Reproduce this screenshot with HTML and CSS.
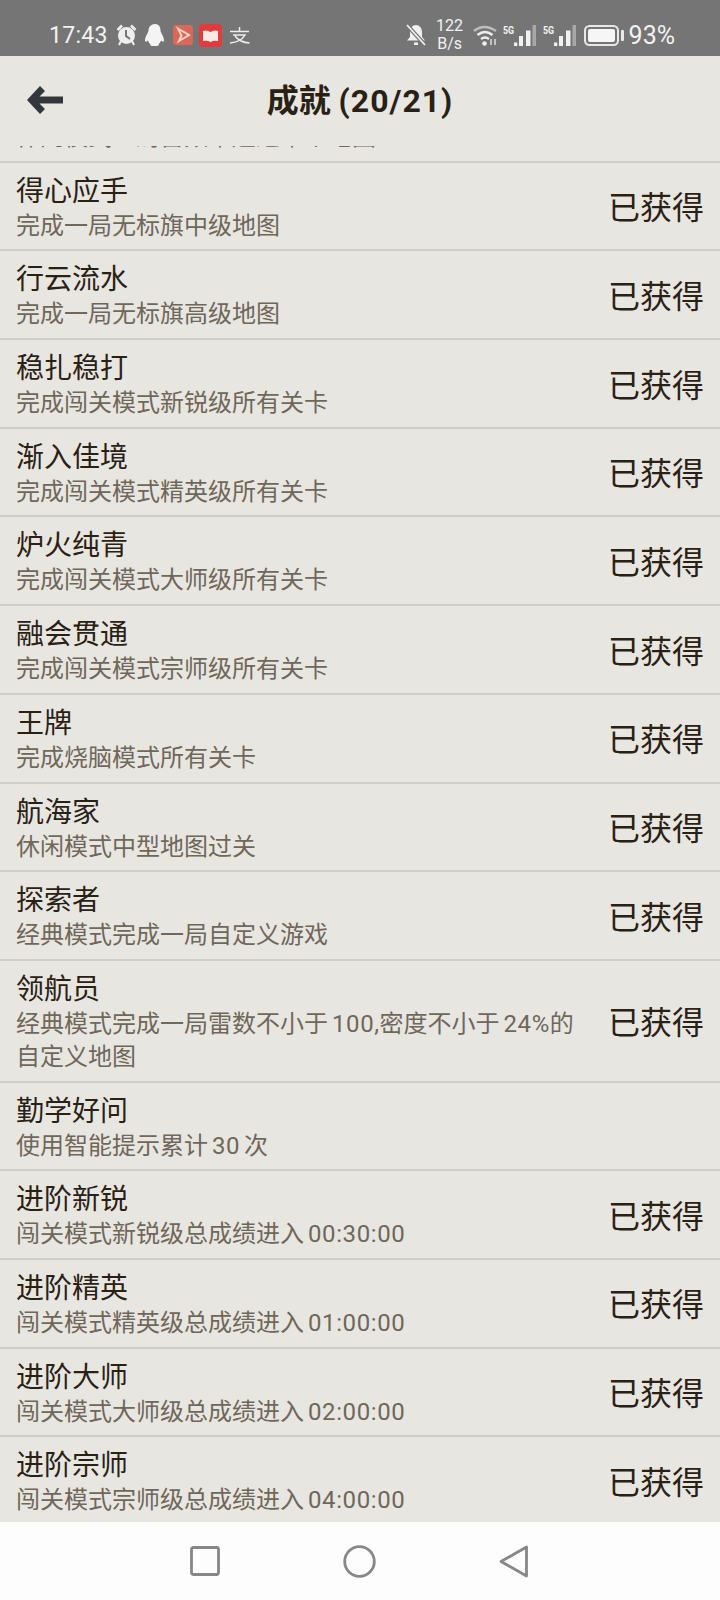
FILE: index.html
```html
<!DOCTYPE html>
<html lang="zh-CN">
<head>
<meta charset="utf-8">
<title>成就</title>
<link rel="stylesheet" href="styles.css">
</head>
<body>
<div class="phone">
  <div class="statusbar">
    <div class="sb-left">
      <span class="time">17:43</span>
      <svg class="ic" width="21" height="22" viewBox="0 0 21 22"><path d="M1.500 6 6 1.500M19.500 6 15 1.500" stroke="#eee" stroke-width="2.600" fill="none"/><path d="M5 17l-2 4M16 17l2 4" stroke="#eee" stroke-width="2"/><circle cx="10.500" cy="11.500" r="8.500" fill="#eee"/><path d="M10 6v6l4 3" stroke="#757575" stroke-width="2" fill="none"/></svg>
      <svg class="ic" width="20" height="22" viewBox="0 0 20 22"><path d="M10 0c4 0 5.500 3 5.500 6.500 0 2 3.500 6 3.500 10 0 1.500-1.500 1.500-3 0-.500 2-1.500 3-2.500 3.500 1 1 0 2-2 2H7.500c-2 0-3-1-2-2C4.500 19.500 3.500 18.500 3 16.500c-1.500 1.500-3 1.500-3 0 0-4 3.500-8 3.500-10C3.500 3 6 0 10 0z" fill="#f4f4f4"/></svg>
      <svg class="ic" width="20" height="20" viewBox="0 0 20 20"><rect width="20" height="20" rx="3" fill="#d9675a"/><path d="M5 3.500 16 10 6 16l2.500-5.500z" fill="none" stroke="#f7d5c3" stroke-width="2"/></svg>
      <svg class="ic ic-red" width="23" height="23" viewBox="0 0 23 23"><rect width="23" height="23" rx="4" fill="#e23b3d"/><path d="M4 7q4-1.500 7.500 1Q15 5.500 19 7v10q-4-1-7.500 1Q8 16 4 17z" fill="#f7e9e4"/></svg>
      <svg class="ic ic-zhi" width="21" height="17" viewBox="0 0 21 17"><path d="M1 4.500h19M10.500 0v4.500M4 8h12Q12 15 1 16M6 9q5 6.500 14.500 7" fill="none" stroke="#eee" stroke-width="1.500"/></svg>
    </div>
    <div class="sb-right">
      <svg class="ic" width="20" height="22" viewBox="0 0 20 22"><path d="M10 1c3.500 0 6 3 6 7v5l3 3.500H1L4 13V8c0-4 2.500-7 6-7zM8 18.500h4V21H8z" fill="#f0f0f0"/><path d="M1 1l18 20" stroke="#757575" stroke-width="4"/><path d="M1 1l18 20" stroke="#f0f0f0" stroke-width="1.800"/></svg>
      <div class="speed"><span>122</span><span>B/s</span></div>
      <svg class="ic" width="24" height="22" viewBox="0 0 24 22"><path d="M1 7q10-8 22 0" fill="none" stroke="#bdbdbd" stroke-width="2.500"/><path d="M4.500 11q7.500-6 15 0" fill="none" stroke="#eee" stroke-width="2.500"/><path d="M8 15q4-3 8 0" fill="none" stroke="#eee" stroke-width="2.200"/><circle cx="11.500" cy="19.500" r="2.300" fill="#eee"/><path d="M18 15v6M22 15v6" stroke="#ddd" stroke-width="1.500"/></svg>
      <div class="signal"><span class="sig5">5G</span><svg width="22" height="21" viewBox="0 0 22 21"><path d="M0 17.500h3.300V21H0zM5 11h4v10H5zM12 5.500h4.500V21H12z" fill="#f0f0f0"/><path d="M18.500 0H22v21h-3.500z" fill="#a8a8a8"/></svg></div>
      <div class="signal"><span class="sig5">5G</span><svg width="22" height="21" viewBox="0 0 22 21"><path d="M0 17.500h3.300V21H0zM5 11h4v10H5zM12 5.500h4.500V21H12z" fill="#f0f0f0"/><path d="M18.500 0H22v21h-3.500z" fill="#a8a8a8"/></svg></div>
      <svg class="ic batt" width="40" height="21" viewBox="0 0 40 21"><rect x="1" y="1" width="33" height="19" rx="4.500" fill="none" stroke="#e8e8e8" stroke-width="2"/><rect x="4" y="4" width="27" height="13" rx="2" fill="#f6f6f6"/><rect x="37" y="5" width="3" height="11" rx="1" fill="#e8e8e8"/></svg>
      <span class="pct">93%</span>
    </div>
  </div>
  <header class="appbar">
    <svg class="back" width="36" height="28" viewBox="0 0 36 28"><path d="M0 14 13 0l5 5-5.500 5.500H36v7H12.500L18 23l-5 5z" fill="#33363a"/></svg>
    <h1 class="title">成就 <span class="title-num">(20/21)</span></h1>
  </header>
  <main class="list">
    <div class="rows">
      <div class="row"><div class="info"><div class="name">胸有成竹</div><div class="desc">休闲模式一局雷数不超过十个地图</div></div></div>
      <div class="row"><div class="info"><div class="name">得心应手</div><div class="desc">完成一局无标旗中级地图</div></div><div class="got">已获得</div></div>
      <div class="row"><div class="info"><div class="name">行云流水</div><div class="desc">完成一局无标旗高级地图</div></div><div class="got">已获得</div></div>
      <div class="row"><div class="info"><div class="name">稳扎稳打</div><div class="desc">完成闯关模式新锐级所有关卡</div></div><div class="got">已获得</div></div>
      <div class="row"><div class="info"><div class="name">渐入佳境</div><div class="desc">完成闯关模式精英级所有关卡</div></div><div class="got">已获得</div></div>
      <div class="row"><div class="info"><div class="name">炉火纯青</div><div class="desc">完成闯关模式大师级所有关卡</div></div><div class="got">已获得</div></div>
      <div class="row"><div class="info"><div class="name">融会贯通</div><div class="desc">完成闯关模式宗师级所有关卡</div></div><div class="got">已获得</div></div>
      <div class="row"><div class="info"><div class="name">王牌</div><div class="desc">完成烧脑模式所有关卡</div></div><div class="got">已获得</div></div>
      <div class="row"><div class="info"><div class="name">航海家</div><div class="desc">休闲模式中型地图过关</div></div><div class="got">已获得</div></div>
      <div class="row"><div class="info"><div class="name">探索者</div><div class="desc">经典模式完成一局自定义游戏</div></div><div class="got">已获得</div></div>
      <div class="row"><div class="info"><div class="name">领航员</div><div class="desc">经典模式完成一局雷数不小于 <span class="num">100,</span>密度不小于 <span class="num">24%</span>的<br>自定义地图</div></div><div class="got">已获得</div></div>
      <div class="row"><div class="info"><div class="name">勤学好问</div><div class="desc">使用智能提示累计 <span class="num">30</span> 次</div></div></div>
      <div class="row"><div class="info"><div class="name">进阶新锐</div><div class="desc">闯关模式新锐级总成绩进入 <span class="num">00:30:00</span></div></div><div class="got">已获得</div></div>
      <div class="row"><div class="info"><div class="name">进阶精英</div><div class="desc">闯关模式精英级总成绩进入 <span class="num">01:00:00</span></div></div><div class="got">已获得</div></div>
      <div class="row"><div class="info"><div class="name">进阶大师</div><div class="desc">闯关模式大师级总成绩进入 <span class="num">02:00:00</span></div></div><div class="got">已获得</div></div>
      <div class="row"><div class="info"><div class="name">进阶宗师</div><div class="desc">闯关模式宗师级总成绩进入 <span class="num">04:00:00</span></div></div><div class="got">已获得</div></div>
    </div>
  </main>
  <nav class="navbar">
    <svg width="30" height="30" viewBox="0 0 30 30"><rect x="1.500" y="1.500" width="27" height="27" rx="2" fill="none" stroke="#878787" stroke-width="2.800"/></svg>
    <svg width="33" height="33" viewBox="0 0 33 33"><circle cx="16.500" cy="16.500" r="14.800" fill="none" stroke="#878787" stroke-width="2.800"/></svg>
    <svg width="30" height="33" viewBox="0 0 30 33"><path d="M27.500 2v29L2 16.500z" fill="none" stroke="#878787" stroke-width="2.800" stroke-linejoin="round"/></svg>
  </nav>
</div>
</body>
</html>
```
FILE: styles.css
```css
* { box-sizing: border-box; }
html, body { margin: 0; padding: 0; }
body { font-family: Roboto, "Noto Sans CJK SC", sans-serif; background: #e8e6e1; }
.phone { width: 720px; height: 1600px; display: flex; flex-direction: column; overflow: hidden; }
.statusbar { height: 56px; flex: none; background: #757575; color: #f2f2f2; display: flex; justify-content: space-between; align-items: center; padding: 0 45px 0 49px; }
.sb-left, .sb-right { display: flex; align-items: center; height: 100%; padding-top: 14px; }
.sb-left { gap: 8px; }
.sb-right { gap: 6px; }
.time { font-size: 23px; letter-spacing: 0.3px; }
.pct { font-size: 25px; margin-left: -1px; }
.ic { display: block; flex: none; }
.ic-red { margin-left: -2px; }
.ic-zhi { margin-left: -1px; }
.speed { display: flex; flex-direction: column; align-items: center; font-size: 16px; line-height: 18px; margin: 0 4px 0 5px; width: 26px; }
.signal { display: flex; align-items: flex-end; }
.signal + .signal { margin-left: 1px; }
.sig5 { font-size: 11px; font-weight: 700; align-self: flex-start; line-height: 11px; width: 11px; white-space: nowrap; transform: scaleX(0.8); transform-origin: left top; }
.batt { margin-left: 2px; }
.appbar { height: 90px; flex: none; display: flex; align-items: center; justify-content: center; position: relative; background: #e8e6e1; z-index: 1; }
.back { position: absolute; left: 27px; top: 30px; }
.title { margin: 0; font-size: 32px; font-weight: 700; color: #2a2115; line-height: 1; }
.title-num { letter-spacing: 1px; }
.list { flex: 1; min-height: 0; overflow: hidden; }
.rows { margin-top: -72px; }
.row { display: flex; align-items: center; padding: 11px 16px 6.700px; border-bottom: 2px solid #d0cec9; }
.info { flex: 1; min-width: 0; padding-right: 30px; }
.name { font-size: 28px; line-height: 36px; color: #2a2115; }
.desc { font-size: 24px; line-height: 33px; color: #6f675a; word-spacing: -2px; }
.num { letter-spacing: 0.6px; }
.got { flex: none; font-size: 32px; line-height: 44px; color: #2a2115; }
.navbar { height: 78px; flex: none; background: #fdfdfd; display: flex; align-items: center; justify-content: center; gap: 123px; padding-right: 1px; }
```
